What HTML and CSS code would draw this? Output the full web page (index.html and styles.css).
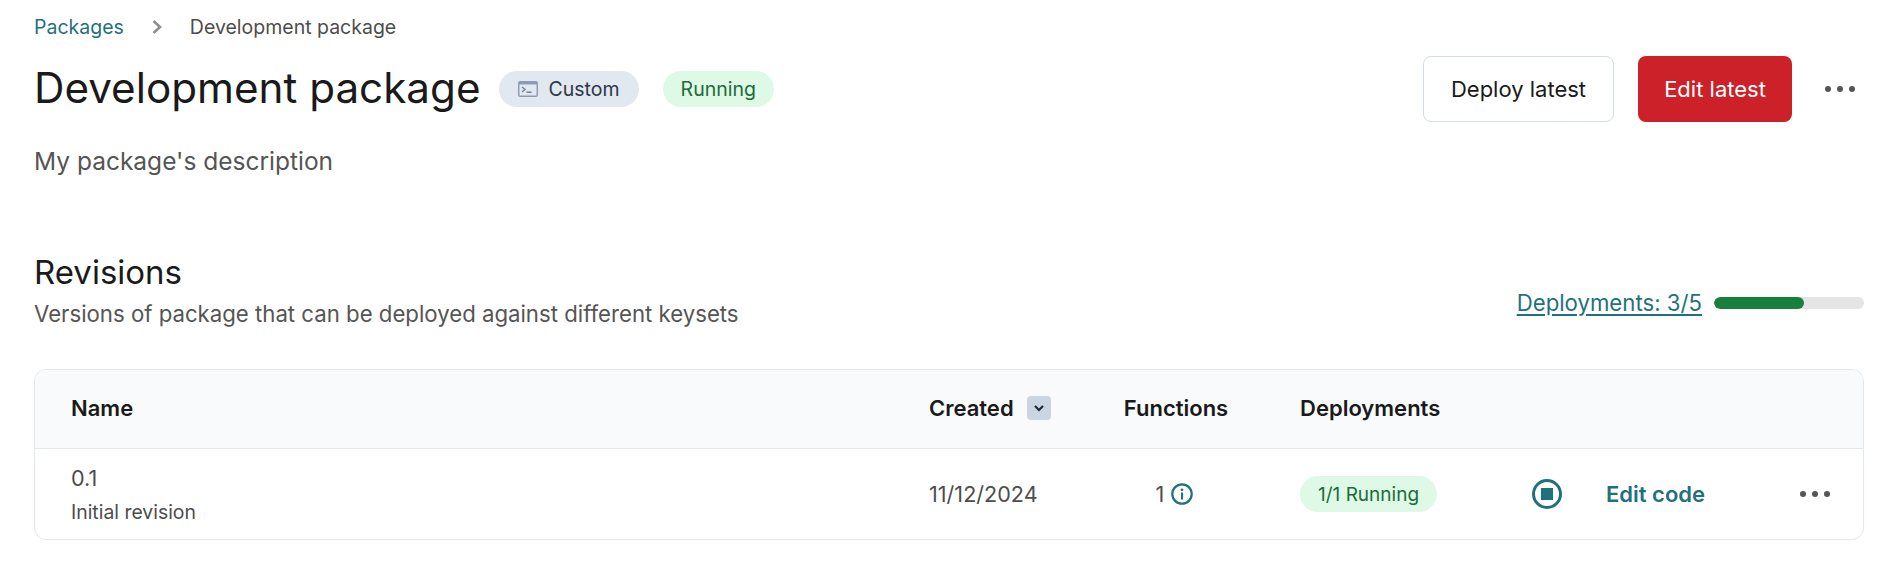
FILE: index.html
```html
<!DOCTYPE html>
<html lang="en">
<head>
<meta charset="utf-8">
<title>Development package</title>
<link rel="stylesheet" href="styles.css">
</head>
<body>
<nav class="crumbs">
  <a class="link" href="#">Packages</a>
  <svg class="chev" viewBox="0 0 12 16" width="12" height="16"><path d="M2.5 2 L9 8 L2.5 14" fill="none" stroke="#8f8f8f" stroke-width="2.6"/></svg>
  <span>Development package</span>
</nav>
<header class="head">
  <h1>Development package</h1>
  <span class="pill pill-grey">
    <svg viewBox="0 0 20 16" width="20" height="16"><rect x="0" y="0" width="20" height="16" rx="2" fill="#8d9cb4"/><rect x="1.5" y="3.5" width="17" height="11" fill="#e2e8f0"/><path d="M4 6 L7 8.5 L4 11" fill="none" stroke="#6f7f99" stroke-width="1.4"/><rect x="8.5" y="10.5" width="5" height="1.5" fill="#6f7f99"/></svg>
    Custom
  </span>
  <span class="pill pill-green">Running</span>
  <div class="actions">
    <button class="btn btn-line">Deploy latest</button>
    <button class="btn btn-red">Edit latest</button>
    <span class="dots"><i></i><i></i><i></i></span>
  </div>
</header>
<p class="desc">My package's description</p>
<section class="rev-head">
  <div>
    <h2>Revisions</h2>
    <p class="sub">Versions of package that can be deployed against different keysets</p>
  </div>
  <div class="quota">
    <a class="link under" href="#">Deployments: 3/5</a>
    <div class="track"><div class="fill" style="width:60%"></div></div>
  </div>
</section>
<section class="table">
  <div class="row row-head">
    <div>Name</div>
    <div class="created">Created <span class="sort"><svg viewBox="0 0 12 8" width="12" height="8"><path d="M2 2 L6 6 L10 2" fill="none" stroke="#1f2937" stroke-width="2.2"/></svg></span></div>
    <div class="center">Functions</div>
    <div>Deployments</div>
    <div></div>
  </div>
  <div class="row row-body">
    <div class="name"><div class="ver">0.1</div><div class="note">Initial revision</div></div>
    <div>11/12/2024</div>
    <div class="center funcs">1
      <svg viewBox="0 0 22 22" width="22" height="22"><circle cx="11" cy="11" r="9.7" fill="none" stroke="#1f717d" stroke-width="2.2"/><circle cx="11" cy="6.8" r="1.4" fill="#1f717d"/><rect x="10" y="9.5" width="2.1" height="7" fill="#1f717d"/></svg>
    </div>
    <div><span class="pill pill-green pill-small">1/1 Running</span></div>
    <div class="row-actions">
      <svg class="stop" viewBox="0 0 30 30" width="30" height="30"><circle cx="15" cy="15" r="13.5" fill="none" stroke="#1f717d" stroke-width="3"/><rect x="9" y="9" width="12" height="12" fill="#1f717d"/></svg>
      <a class="edit" href="#">Edit code</a>
      <span class="dots"><i></i><i></i><i></i></span>
    </div>
  </div>
</section>
</body>
</html>
```

FILE: styles.css
```css
* { box-sizing: border-box; }
html, body { margin: 0; background: #fff; }
body {
  padding: 15px 24px 0 34px;
  font-family: Inter, Lato, sans-serif;
  color: #4d4d4d;
  font-size: 21.6px;
}
.link { color: #1f717d; text-decoration: none; }
.under { text-decoration: underline; text-underline-offset: 3px; font-size: 22.2px; }
.crumbs { display: flex; align-items: center; height: 24px; font-size: 19.5px; }
.chev { margin: 0 27px 0 27px; }
.head { display: flex; align-items: center; margin-top: 17px; height: 66px; }
h1 { margin: 0 0 2px; font-size: 42.2px; font-weight: 400; color: #1a1a1a; line-height: 64px; }
.pill { display: inline-flex; align-items: center; height: 36px; border-radius: 18px; padding: 0 18px; font-size: 19.5px; }
.pill-small { font-size: 19px; }
.pill-grey { background: #e2e8f0; color: #2d3748; margin-left: 18px; gap: 11px; padding: 0 19px; }
.pill-green { background: #dff9e7; color: #1c6b3a; }
.head > .pill-green { margin-left: 24px; }
.actions { margin-left: auto; display: flex; align-items: center; }
.btn { height: 66px; border-radius: 8px; font: inherit; font-size: 22px; padding: 0; }
.btn-line { width: 191px; background: #fff; border: 1.5px solid #d3dcea; color: #1a1a1a; }
.btn-red { width: 154px; margin-left: 24px; background: #cc2128; border: 0; color: #fff; }
.dots { display: inline-flex; gap: 6px; }
.dots i { width: 6px; height: 6px; border-radius: 50%; background: #555; }
.actions .dots { margin-left: 33px; margin-right: 9px; }
.desc { margin: 24px 0 0; font-size: 24.5px; line-height: 30px; color: #555; }
.rev-head { display: flex; justify-content: space-between; align-items: flex-end; margin-top: 76px; }
h2 { margin: 0; font-size: 33px; font-weight: 400; color: #1a1a1a; line-height: 40px; }
.sub { margin: 8px 0 0; font-size: 22.2px; line-height: 28px; color: #555; }
.quota { display: flex; align-items: center; gap: 12px; margin-bottom: 12px; }
.track { width: 150px; height: 12px; border-radius: 6px; background: #e5e5e5; overflow: hidden; }
.fill { height: 100%; border-radius: 6px; background: #16803c; }
.table { margin-top: 41px; border: 1px solid #e2e8f0; border-radius: 12px; overflow: hidden; }
.row { display: grid; grid-template-columns: 858px 123px 248px 200px 1fr; padding-left: 36px; align-items: center; }
.row-head { height: 79px; padding-bottom: 2px; background: #f8fafc; border-bottom: 1px solid #e2e8f0; color: #1a1a1a; font-weight: 600; font-size: 22px; }
.row-body { height: 90px; font-size: 21.6px; }
.center { text-align: center; }
.created { display: flex; align-items: center; gap: 13px; }
.sort { display: flex; align-items: center; justify-content: center; flex: none; width: 24px; height: 24px; border-radius: 4px; background: #cbd5e1; }
.funcs { display: flex; align-items: center; justify-content: center; gap: 7px; padding-right: 3px; }
.ver { font-size: 21.6px; line-height: 28px; }
.note { font-size: 19.4px; line-height: 26px; margin-top: 7px; }
.row-actions { display: flex; align-items: center; }
.stop { margin-left: 32px; }
.edit { margin-left: 44px; color: #1f717d; font-weight: 600; text-decoration: none; font-size: 22px; }
.row-actions .dots { margin-left: auto; margin-right: 33px; }
```
